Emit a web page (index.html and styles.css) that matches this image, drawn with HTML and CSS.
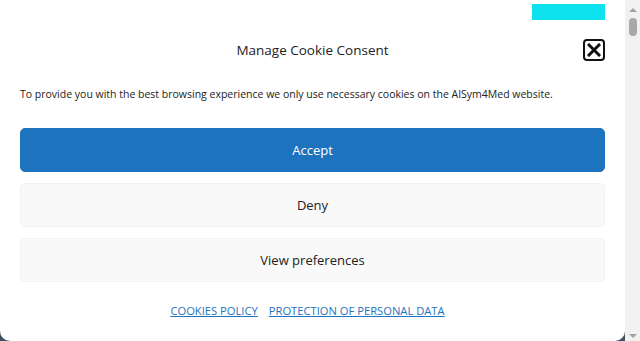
FILE: index.html
```html
<!DOCTYPE html>
<html>
<head>
<meta charset="utf-8">
<link rel="stylesheet" href="styles.css">
</head>
<body>
<div class="page">
  <div class="modal">
    <div class="topbar"><span class="cyan"></span></div>
    <div class="header">
      <div class="title">Manage Cookie Consent</div>
      <button class="close" aria-label="close">
        <svg width="14" height="14" viewBox="0 0 14 14"><path d="M2 2 L12 12 M12 2 L2 12" stroke="#111" stroke-width="3" stroke-linecap="square"/></svg>
      </button>
    </div>
    <p class="message">To provide you with the best browsing experience we only use necessary cookies on the AISym4Med website.</p>
    <div class="buttons">
      <button class="btn accept">Accept</button>
      <button class="btn">Deny</button>
      <button class="btn">View preferences</button>
    </div>
    <div class="links">
      <a href="#">COOKIES POLICY</a>
      <a href="#">PROTECTION OF PERSONAL DATA</a>
    </div>
  </div>
  <div class="scrollbar">
    <span class="arrow up"></span>
    <span class="thumb"></span>
    <span class="spacer"></span>
    <span class="arrow down"></span>
  </div>
</div>
</body>
</html>
```
FILE: styles.css
```css
html, body {
  margin: 0;
  padding: 0;
  height: 100%;
  overflow: hidden;
}
body {
  font-family: "Open Sans", "Noto Sans", sans-serif;
  color: #222;
}
.page {
  display: flex;
  height: 341px;
  background: #3e5163;
}
.modal {
  flex: 1;
  background: #fff;
  border-radius: 0 0 10px 10px;
  padding: 0 20px 0 20px;
  display: flex;
  flex-direction: column;
}
.topbar {
  display: flex;
  justify-content: flex-end;
  padding-top: 4px;
  height: 16px;
}
.cyan {
  display: block;
  width: 73px;
  height: 16px;
  background: #0ee2ee;
}
.header {
  position: relative;
  display: flex;
  justify-content: center;
  align-items: center;
  height: 22px;
  margin-top: 19px;
}
.title {
  font-size: 13.5px;
}
.close {
  position: absolute;
  right: 0;
  top: 0;
  width: 22px;
  height: 22px;
  box-sizing: border-box;
  border: 2px solid #111;
  border-radius: 4px;
  background: #fff;
  padding: 0;
  display: flex;
  align-items: center;
  justify-content: center;
}
.message {
  margin: 25px 0 0 0;
  font-size: 10.5px;
  line-height: 16px;
  white-space: nowrap;
}
.buttons {
  display: flex;
  flex-direction: column;
  gap: 11px;
  margin-top: 26px;
}
.btn {
  height: 44px;
  border: 1px solid #f2f2f2;
  background: #f9f9f9;
  border-radius: 5px;
  font-family: inherit;
  font-size: 13px;
  color: #222;
}
.btn.accept {
  background: #1e73be;
  border-color: #1e73be;
  color: #fff;
}
.links {
  display: flex;
  justify-content: center;
  gap: 11px;
  margin-top: 21px;
  padding-right: 10px;
  font-size: 11.2px;
}
.links a {
  color: #1e73be;
  text-decoration: underline;
}
.scrollbar {
  width: 15px;
  background: #f1f1f1;
  display: flex;
  flex-direction: column;
  align-items: center;
}
.arrow {
  width: 0;
  height: 0;
  border-left: 4px solid transparent;
  border-right: 4px solid transparent;
}
.arrow.up {
  border-bottom: 4px solid #a3a3a3;
  margin-top: 8px;
}
.arrow.down {
  border-top: 4px solid #a3a3a3;
  margin-bottom: 3px;
}
.thumb {
  width: 8px;
  height: 18px;
  border-radius: 4px;
  background: #a8a8a8;
  margin-top: 6px;
}
.spacer {
  flex: 1;
}
```
